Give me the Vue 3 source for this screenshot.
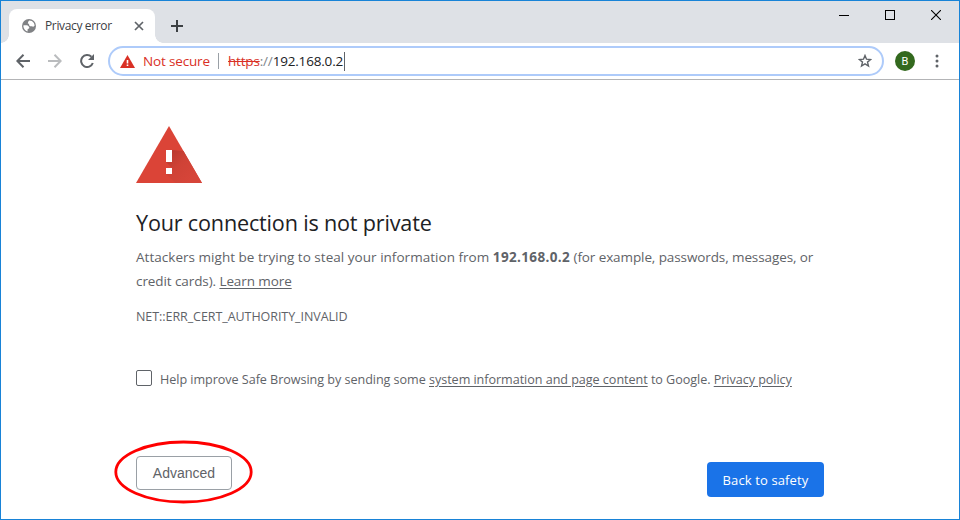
<script setup>
const errorCode = 'NET::ERR_CERT_AUTHORITY_INVALID'
const host = '192.168.0.2'
</script>

<template>
  <div class="window">
    <header class="tabstrip">
      <div class="tab">
        <svg class="globe" width="14" height="14" viewBox="0 0 14 14">
          <circle cx="7" cy="7" r="7" fill="#808285" />
          <path d="M7.200 1.600 9.800 1.900C11.600 2.900 12.600 4.800 12.600 6.700L11.300 7.700 9.600 7.200 8.200 7.300 6.800 6.100 7.300 5 5.800 4.400 6.200 2.700Z" fill="#fff" />
          <path d="M1.500 6.200 5.300 6.300 7.300 7.900 7.100 9.400 5.700 9.900 5.500 12.400C3.200 11.700 1.600 9.700 1.400 7.500Z" fill="#fff" />
        </svg>
        <span class="tab-title">Privacy error</span>
        <svg class="tab-close" width="10" height="10" viewBox="0 0 10 10"><path d="M1 1 9 9M9 1 1 9" stroke="#5f6368" stroke-width="1.700" /></svg>
      </div>
      <svg class="new-tab" width="12" height="12" viewBox="0 0 12 12"><path d="M6 0V12M0 6H12" stroke="#3c4043" stroke-width="2" /></svg>
      <div class="controls">
        <svg width="10" height="11" viewBox="0 0 10 11"><path d="M0 5.500H10" stroke="#000" /></svg>
        <svg width="10" height="11" viewBox="0 0 10 11"><rect x=".5" y=".5" width="9" height="9" fill="none" stroke="#000" /></svg>
        <svg width="10" height="10" viewBox="0 0 10 10"><path d="M0 0 10 10M10 0 0 10" stroke="#000" stroke-width="1.100" /></svg>
      </div>
    </header>

    <nav class="toolbar">
      <svg class="nav-icon" width="14" height="14" viewBox="0 0 14 14"><path d="M14 7H1.500M7.500 .8 1.300 7 7.500 13.200" fill="none" stroke="#5f6368" stroke-width="2" /></svg>
      <svg class="nav-icon" width="14" height="14" viewBox="0 0 14 14"><path d="M0 7H12.500M6.500 .8 12.700 7 6.500 13.200" fill="none" stroke="#babcbe" stroke-width="2" /></svg>
      <svg class="nav-icon" width="14" height="14" viewBox="0 0 14 14"><path d="M11.400 2.800A6 6 0 1 0 12.800 9" fill="none" stroke="#5f6368" stroke-width="2" /><path d="M14 0V6H8Z" fill="#5f6368" /></svg>
      <div class="omnibox">
        <svg class="alert" width="15" height="13" viewBox="0 0 15 13"><path d="M7.500 0 15 13H0Z" fill="#d93025" /><path d="M6.700 5H8.300V8.500H6.700ZM6.700 9.500H8.300V11.100H6.700Z" fill="#fff" /></svg>
        <span class="not-secure">Not secure</span>
        <span class="divider"></span>
        <span class="url"><s>https</s><i>://</i>{{ host }}</span>
        <span class="caret"></span>
        <svg class="star" width="14" height="14" viewBox="0 0 14 14"><path d="M7 1.500 8.500 5.200 12.600 5.500 9.500 8.100 10.500 12.100 7 9.900 3.500 12.100 4.500 8.100 1.400 5.500 5.500 5.200Z" fill="none" stroke="#5f6368" stroke-width="1.400" /></svg>
      </div>
      <span class="avatar">B</span>
      <svg class="menu" width="4" height="14" viewBox="0 0 4 14"><g fill="#5f6368"><circle cx="2" cy="2" r="1.500" /><circle cx="2" cy="7" r="1.500" /><circle cx="2" cy="12" r="1.500" /></g></svg>
    </nav>

    <main class="page">
      <svg class="warning" width="66" height="57" viewBox="0 0 66 57">
        <defs>
          <linearGradient id="shade" gradientUnits="userSpaceOnUse" x1="31" y1="29" x2="55" y2="53"><stop stop-color="#b93a30" /><stop offset=".45" stop-color="#cf4236" /><stop offset="1" stop-color="#d64539" /></linearGradient>
        </defs>
        <path d="M33 0 66 57H0Z" fill="#db4437" />
        <path d="M36 24 47.500 25.100 66 57H39.500L30 48 36 42 30 36Z" fill="url(#shade)" />
        <path d="M30 24H36V36H30ZM30 42H36V48H30Z" fill="#fff" />
      </svg>
      <h1>Your connection is not private</h1>
      <p class="message">
        <span class="line first">Attackers might be trying to steal your information from <b>{{ host }}</b><span class="example"> (for example, passwords, messages, or</span></span>
        <span class="line second">credit cards). <a>Learn more</a></span>
      </p>
      <div class="code">{{ errorCode }}</div>
      <label class="opt-in"><span class="checkbox"></span><span class="opt-text">Help improve Safe Browsing by sending some <a>system information and page content</a> to Google. <a>Privacy policy</a></span></label>
      <div class="actions">
        <div class="advanced">Advanced
          <svg class="ring" width="140" height="64" viewBox="0 0 140 64"><ellipse cx="69.500" cy="32" rx="67.700" ry="30" fill="none" stroke="#ff0000" stroke-width="2.800" /></svg>
        </div>
        <div class="safety"><span>Back to safety</span></div>
      </div>
    </main>
  </div>
</template>

<style>
body { margin: 0; background: #fff; }
</style>

<style scoped>
* { box-sizing: border-box; }
svg { display: block; flex: none; }
.window { width: 960px; height: 520px; border: 1px solid #1883d7; background: #fff; overflow: hidden; font-family: "Open Sans", "Noto Sans", sans-serif; white-space: nowrap; }
.tabstrip { height: 42px; background: #dee1e6; display: flex; align-items: flex-start; padding-left: 8px; }
.tab { position: relative; width: 146px; height: 34px; margin-top: 8px; background: #fff; border-radius: 8px 8px 0 0; display: flex; align-items: center; padding-left: 13px; }
.tab::before, .tab::after { content: ""; position: absolute; bottom: 0; width: 8px; height: 8px; }
.tab::before { left: -8px; background: radial-gradient(circle at 0 0, transparent 7.500px, #fff 8px); }
.tab::after { right: -8px; background: radial-gradient(circle at 100% 0, transparent 7.500px, #fff 8px); }
.tab-title { width: 67px; margin-left: 9px; font-size: 12px; line-height: 16px; color: #3c4043; letter-spacing: -.36px; }
.tab-close { margin-left: 22px; }
.new-tab { margin: 19px 0 0 16px; }
.controls { margin: 9px 18px 0 auto; display: flex; gap: 36px; }
.toolbar { height: 37px; border-bottom: 1px solid #b3b4b6; display: flex; align-items: center; padding-left: 15px; }
.nav-icon { margin-right: 18px; }
.omnibox { width: 776px; height: 30px; margin-left: -4px; border: 2px solid #aecbfa; border-radius: 15px; display: flex; align-items: center; padding: 0 10px; font-size: 13.5px; line-height: 18px; }
.not-secure { width: 67px; margin-left: 8px; color: #d93025; letter-spacing: -.16px; }
.divider { width: 1px; height: 16px; margin: 0 9px 0 8px; background: #9aa0a6; }
.url { width: 116px; color: #202124; letter-spacing: -.18px; }
.url s { color: #d93025; }
.url i { color: #80868b; font-style: normal; }
.caret { width: 1px; height: 19px; background: #5f6368; }
.star { margin-left: auto; }
.avatar { width: 20px; height: 20px; margin-left: 11px; border-radius: 50%; background: #33691e; color: #fff; font: 11px/21px Roboto, sans-serif; text-align: center; }
.menu { margin-left: 20px; }
.page { padding: 46px 135px 0; color: #5f6368; }
h1 { margin: 22px 0 0; font-size: 21.6px; line-height: 36px; font-weight: 400; color: #202124; letter-spacing: -.18px; }
.message { margin: 4px 0 0; font-size: 13.5px; line-height: 24px; }
.line { display: block; }
.first { letter-spacing: .03px; }
.first b { letter-spacing: .36px; }
.example { letter-spacing: -.1px; }
.second { letter-spacing: -.09px; }
a { text-decoration: underline; text-underline-offset: 2px; }
.code { margin-top: 15px; font-size: 12.5px; line-height: 18px; letter-spacing: -.06px; }
.opt-in { margin-top: 44px; height: 16px; display: flex; align-items: center; font-size: 12.6px; }
.checkbox { width: 16px; height: 16px; border: 1px solid #5f6368; border-radius: 2px; margin-right: 8px; }
.opt-text { position: relative; top: 1px; letter-spacing: -.045px; }
.actions { margin-top: 70px; width: 688px; display: flex; justify-content: space-between; align-items: flex-start; }
.advanced { position: relative; width: 96px; height: 34px; border: 1px solid #9aa0a6; border-radius: 4px; text-align: center; font: 14px/32px "Liberation Sans", sans-serif; }
.ring { position: absolute; left: -23px; top: -17px; }
.safety { width: 117px; height: 35px; margin-top: 6px; border-radius: 4px; background: #1a73e8; color: #fff; text-align: center; font-size: 13px; line-height: 36px; letter-spacing: .12px; }
</style>
